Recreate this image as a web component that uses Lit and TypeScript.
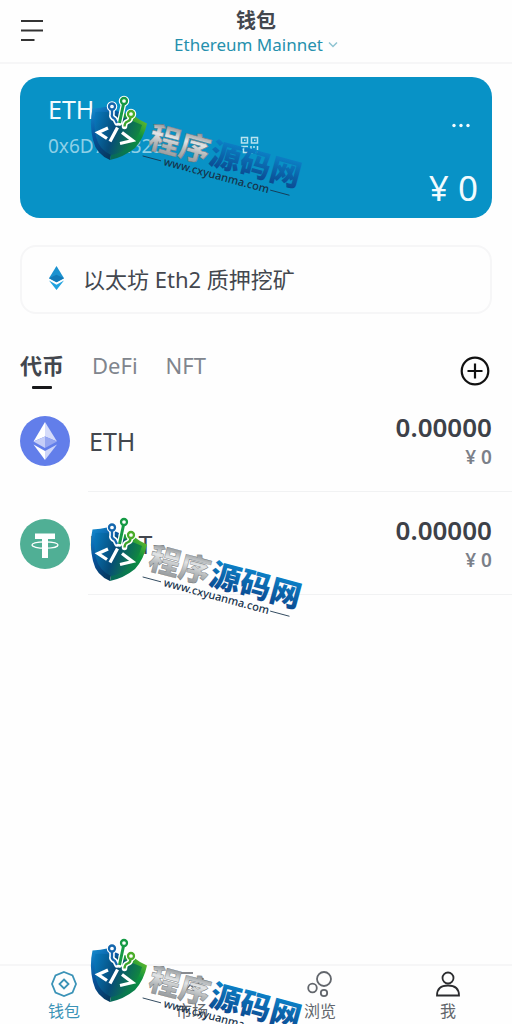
import { LitElement, html, svg, css } from "lit";
import { customElement, property } from "lit/decorators.js";

const ethCoin = svg`
  <circle cx="25" cy="25" r="25" fill="#627eea"/>
  <path d="M25 6 13.5 25.5 25 20.5Z" fill="#fff"/>
  <path d="M25 6v14.500l12 5Z" fill="#d5dcfa"/>
  <path d="M25 20.500 13.500 25.500 25 32Z" fill="#c5cef8"/>
  <path d="M25 20.500v11.500l12-6.500Z" fill="#96a7f1"/>
  <path d="M13.500 28.500 25 44v-9Z" fill="#fff"/>
  <path d="M25 35v9l12-15.500Z" fill="#cdd5f9"/>`;

const usdtCoin = svg`
  <circle cx="25" cy="25" r="25" fill="#50af95"/>
  <path d="M15 14.500h20v5.500h-7v19h-6v-19h-7Z" fill="#fff"/>
  <ellipse cx="25" cy="26" rx="13" ry="3.200" fill="none" stroke="#fff" stroke-width="1.300"/>`;

@customElement("site-mark")
export class SiteMark extends LitElement {
  static styles = css`
    :host { display: block; height: 112px; width: 232px; }
    svg { display: block; overflow: visible; }
    .name { font: 900 31px "Noto Sans CJK SC", sans-serif; }
    .site { font: 500 11px "Noto Sans", sans-serif; fill: #17324a; }
  `;
  render() {
    const stems = "M27 15.500v4.500q-1 3 3 5l2 4M38.500 10 34.500 29M45.500 23.500q0 3-3 4t-3 5";
    return html`<svg width="232" height="112" viewBox="0 0 232 112" aria-hidden="true">
      <defs>
        <linearGradient id="left" x1="0" y1="0" x2="0.500" y2="1">
          <stop offset="0" stop-color="#1590d2"/><stop offset=".5" stop-color="#08529c"/><stop offset="1" stop-color="#06395f"/>
        </linearGradient>
        <linearGradient id="right" x1="1" y1="0" x2="0.200" y2="1">
          <stop offset="0" stop-color="#8acb22"/><stop offset=".4" stop-color="#0c9140"/><stop offset="1" stop-color="#086b58"/>
        </linearGradient>
        <linearGradient id="inner" x1="0" y1="0.200" x2="1" y2="0.500">
          <stop offset="0" stop-color="#0876b9"/><stop offset=".45" stop-color="#064b78"/><stop offset="1" stop-color="#128d3a"/>
        </linearGradient>
        <linearGradient id="silver" x1="0" y1="0" x2="0" y2="1">
          <stop offset=".2" stop-color="#8d9295"/><stop offset=".45" stop-color="#e2e4e5"/><stop offset=".65" stop-color="#b4b8ba"/><stop offset="1" stop-color="#85898c"/>
        </linearGradient>
        <linearGradient id="blue" x1="0" y1="0" x2="0" y2="1">
          <stop offset=".2" stop-color="#0c82c8"/><stop offset="1" stop-color="#0b3f86"/>
        </linearGradient>
      </defs>
      <path d="M7.500 14.500Q16 14 22 12.500L34 18 25 66Q11 60 8 46 4 30 7.500 14.500Z" fill="url(#left)"/>
      <path d="M34 18 48 21Q54 26 62 29.500 59 44 50 54 39 63 25 66Z" fill="url(#right)"/>
      <path d="M10.500 18Q22 17 30 20T57 31Q53 45 45 52 36 60 26 61 14 55 11 43 8 30 10.500 18Z" fill="url(#inner)"/>
      <g fill="none" stroke="#fff" stroke-width="5.500" stroke-linecap="round">
        <path d=${stems}/><circle cx="27" cy="12.500" r="2.500"/><circle cx="39" cy="7" r="2.500"/><circle cx="46" cy="20" r="2.500"/>
      </g>
      <g fill="none" stroke-width="2.300">
        <path d="M27 15.500v4.500q-1 3 3 5l2 4" stroke="#1466ad"/>
        <path d="M38.500 10 34.500 29" stroke="#159a45" stroke-width="3"/>
        <path d="M45.500 23.500q0 3-3 4t-3 5" stroke="#3da52c"/>
        <circle cx="27" cy="12.500" r="3" stroke="#1466ad"/>
        <circle cx="39" cy="7" r="3" stroke="#159a45"/>
        <circle cx="46" cy="20" r="3" stroke="#4bad29"/>
      </g>
      <path d="M23 34 13 38.500 22 44.500M32.500 33.500 25 47.500M37 38.500 47.500 46.500 35 49.500" fill="none" stroke="#fff" stroke-width="3.300"/>
      <g transform="translate(62 53) rotate(15)">
        <text class="name" x="0" y="0" fill="url(#silver)" stroke="#6d7275" stroke-width=".4">程序</text>
        <text class="name" x="63" y="0" fill="url(#blue)">源码网</text>
      </g>
      <g transform="translate(78 71) rotate(15)">
        <text class="site" x="0" y="0">www.cxyuanma.com</text>
        <path d="M-22-3.500H-3M110-3.500H130" stroke="#17324a" stroke-width=".8"/>
      </g>
    </svg>`;
  }
}

@customElement("token-row")
export class TokenRow extends LitElement {
  @property() symbol = "";
  @property() amount = "0.00000";
  @property() value = "¥ 0";
  static styles = css`
    :host { display: flex; gap: 18px; padding-left: 20px; }
    svg { flex: none; width: 50px; height: 50px; margin-top: 27px; }
    .body { flex: 1; display: flex; justify-content: space-between; align-items: flex-start; height: 103px; box-sizing: border-box; border-bottom: 1px solid #f1f2f3; padding: 22px 20px 0 1px; }
    .symbol { font-size: 25px; line-height: 32px; margin-top: 14px; color: #43474e; }
    .sum { text-align: right; }
    .amount { font-size: 26px; line-height: 32px; font-weight: 600; color: #3d4148; }
    .value { font-size: 19px; line-height: 28px; font-weight: 600; color: #7b8089; }
  `;
  render() {
    return html`<svg viewBox="0 0 50 50" aria-hidden="true">${this.symbol === "ETH" ? ethCoin : usdtCoin}</svg>
      <div class="body">
        <span class="symbol">${this.symbol}</span>
        <div class="sum"><div class="amount">${this.amount}</div><div class="value">${this.value}</div></div>
      </div>`;
  }
}

const navItems = [
  { label: "钱包", active: true, icon: svg`<path d="M14 2 22.500 5.500 26 14 22.500 22.500 14 26 5.500 22.500 2 14 5.500 5.500Z"/><path d="m14 9.500 4.500 4.500-4.500 4.500L9.500 14Z"/>` },
  { label: "市场", active: false, icon: svg`<path d="M3 3h12M6 22l6-7 4 3 9-9M20 7.500l5 1-1 5" stroke-width="1.300"/>` },
  { label: "浏览", active: false, icon: svg`<circle cx="18" cy="9" r="7"/><circle cx="6.500" cy="18" r="4.300"/><circle cx="18" cy="23" r="3.200"/>` },
  { label: "我", active: false, dark: true, icon: svg`<circle cx="14" cy="8" r="5.500"/><path d="M3 25.500q0-10 11-10t11 10Z"/>` },
];

@customElement("app-root")
export class AppRoot extends LitElement {
  static styles = css`
    :host { display: flex; flex-direction: column; position: relative; min-height: 100vh; background: #fefefe; color: #43474e; font-family: "Noto Sans", "Noto Sans CJK SC", sans-serif; }
    * { box-sizing: border-box; }
    button, a { font: inherit; color: inherit; background: none; border: 0; padding: 0; margin: 0; text-decoration: none; cursor: pointer; }
    svg { display: block; fill: none; stroke: currentColor; }
    h1 { margin: 0; font-size: 20px; line-height: 26px; font-weight: 700; }
    header { display: grid; grid-template-columns: 1fr auto 1fr; height: 64px; padding: 8px 20px 0; border-bottom: 2px solid #f6f6f7; }
    .menu { justify-self: start; align-self: start; margin-top: 11px; color: #333; }
    .heading { text-align: center; }
    .network { display: flex; align-items: center; gap: 5px; font-size: 17px; line-height: 22px; color: #2590ad; }
    .network svg { color: #8fc4d2; }
    .card { margin: 13px 20px 0; height: 141px; padding: 16px 14px 8px 28px; border-radius: 20px; background: #0892c6; color: #f2fbfe; display: grid; grid-template-columns: 1fr auto; grid-template-rows: 32px 1fr auto; }
    .coin { font-size: 25px; line-height: 32px; }
    .more { grid-column: 2; grid-row: 1 / 3; justify-self: end; align-self: start; margin: 30px 8px 0 0; }
    .more svg { fill: currentColor; stroke: none; }
    .address { display: flex; align-items: flex-start; font-size: 19px; line-height: 26px; margin-top: 8px; color: #8fd0e7; }
    .address span { width: 192px; }
    .address button { margin-top: 3px; color: #b8e2f0; }
    .balance { grid-column: 1 / 3; justify-self: end; font-size: 35px; line-height: 44px; }
    .stake { display: flex; align-items: center; gap: 19px; margin: 27px 20px 0; height: 69px; padding: 0 27px 4px; border: 2px solid #f6f6f7; border-radius: 16px; font-size: 22px; }
    .tabs { display: flex; align-items: flex-start; gap: 28px; padding: 35px 20px 0; height: 75px; font-size: 22px; line-height: 32px; color: #80858d; }
    .tab { display: flex; flex-direction: column; align-items: center; gap: 5px; }
    .active-tab { font-weight: 700; color: #43474e; }
    .active-tab::after { content: ""; width: 20px; height: 3px; border-radius: 1px; background: #17181a; }
    .add { margin: 7px 2px 0 auto; color: #111; }
    nav { display: grid; grid-template-columns: repeat(4, 1fr); margin-top: auto; height: 60px; border-top: 2px solid #f6f6f7; padding-top: 4px; font-size: 16px; line-height: 26px; color: #62666c; }
    .item { display: flex; flex-direction: column; align-items: center; }
    .current { color: #3b93b7; }
    .dark svg { color: #2b2c2f; }
    .marks { position: absolute; inset: 0; overflow: hidden; pointer-events: none; display: flex; flex-direction: column; gap: 309px; padding: 94px 0 0 85px; }
    .marks site-mark { flex: none; }
  `;
  render() {
    return html`
      <header>
        <button class="menu" aria-label="菜单"><svg width="24" height="24" stroke-width="2"><path d="M1 2h22M1 11.500h22M1 21h13.500"/></svg></button>
        <div class="heading">
          <h1>钱包</h1>
          <button class="network">Ethereum Mainnet<svg width="10" height="8" stroke-width="1.500"><path d="m1 1.500 4 4 4-4"/></svg></button>
        </div>
      </header>
      <section class="card">
        <div class="coin">ETH</div>
        <button class="more" aria-label="更多"><svg width="18" height="5"><circle cx="2" cy="2.500" r="1.700"/><circle cx="9" cy="2.500" r="1.700"/><circle cx="16" cy="2.500" r="1.700"/></svg></button>
        <div class="address"><span>0x6D7...232E</span>
          <button aria-label="二维码"><svg width="19" height="18" stroke-width="1.500">
            <path d="M1.500 1.500h6v5.500h-6ZM11.500 1.500h6v5.500h-6ZM1 10.500h7M1.500 13h2v3.500h4V13M11 10v3.500M14 10v2M17.500 10v4M11 16.500h2M15 14v3M17 16.500h2"/><path d="M4 4.200h1.500M14 4.200h1.500"/></svg></button>
        </div>
        <div class="balance">¥ 0</div>
      </section>
      <a class="stake" href="#stake">
        <svg width="15" height="24" viewBox="0 0 15 24" stroke="none"><path d="M7.500 0 0 12.200l7.500 4 7.500-4Z" fill="#1b92d0" stroke="none"/><path d="m0 12.200 7.500-3.400 7.500 3.400-7.500 4Z" fill="#1279b8" stroke="none"/><path d="m0 14.500 7.500 4.200 7.500-4.200L7.500 24Z" fill="#20a2df" stroke="none"/></svg>
        <span>以太坊 Eth2 质押挖矿</span>
      </a>
      <div class="tabs">
        <button class="tab active-tab">代币</button>
        <button class="tab">DeFi</button>
        <button class="tab">NFT</button>
        <button class="add" aria-label="添加"><svg width="30" height="30" stroke-width="2.200"><circle cx="15" cy="15" r="13.300"/><path d="M15 7.500v15M7.500 15h15"/></svg></button>
      </div>
      <main>
        <token-row symbol="ETH"></token-row>
        <token-row symbol="USDT"></token-row>
      </main>
      <nav>
        ${navItems.map((n) => html`<a class="item ${n.active ? "current" : ""} ${n.dark ? "dark" : ""}" href="#${n.label}"><svg width="28" height="28" stroke-width="1.800">${n.icon}</svg><span>${n.label}</span></a>`)}
      </nav>
      <div class="marks"><site-mark></site-mark><site-mark></site-mark><site-mark></site-mark></div>`;
  }
}
